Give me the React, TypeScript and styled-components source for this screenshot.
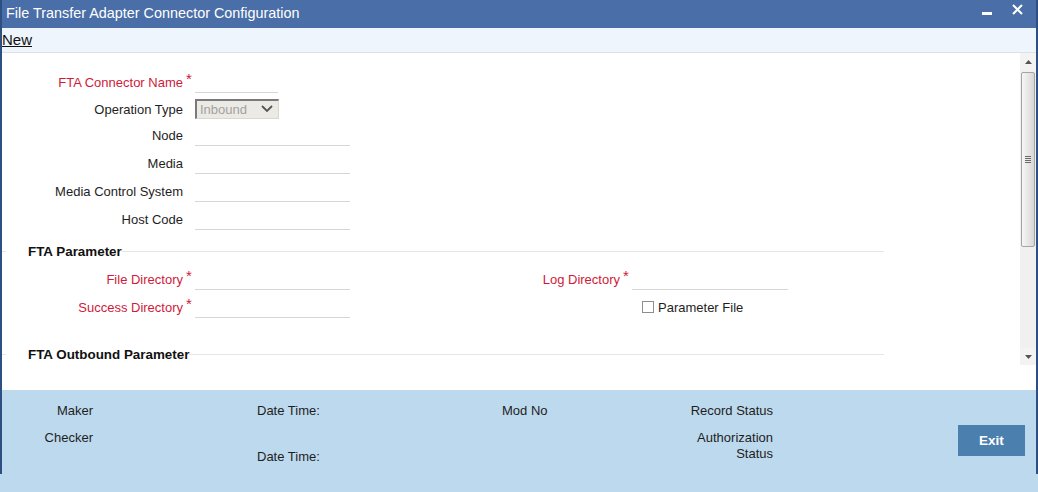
import React from "react";
import styled, { createGlobalStyle } from "styled-components";

const GlobalStyle = createGlobalStyle`
  html, body { margin: 0; padding: 0; background: #fff; }
  body { font-family: "Liberation Sans", Arial, sans-serif; font-size: 13px; color: #1e1e1e; }
  * { box-sizing: border-box; }
`;

const Window = styled.div`
  width: 1038px;
  height: 492px;
  display: flex;
  flex-direction: column;
  background: #fff;
`;

const Frame = styled.div`
  height: 474px;
  flex: none;
  display: flex;
  flex-direction: column;
  border-left: 2px solid #2d4f82;
  border-right: 2px solid #2d4f82;
`;

const TitleBar = styled.div`
  height: 28px;
  flex: none;
  background: #4a6ea7;
  color: #fff;
  display: flex;
  align-items: flex-start;
  padding-left: 4px;
  font-size: 14.4px;
`;

const TitleText = styled.span`
  flex: 1;
  line-height: 27px;
`;

const MinBtn = styled.span`
  width: 10px;
  height: 3px;
  background: #fff;
  margin-top: 12px;
  margin-right: 20px;
`;

const CloseBtn = styled.svg`
  width: 11px;
  height: 11px;
  margin-top: 4px;
  margin-right: 13px;
`;

const Toolbar = styled.div`
  height: 25px;
  flex: none;
  background: #eef5fd;
  border-bottom: 1px solid #dde1e5;
  display: flex;
  align-items: center;
`;

const ToolLink = styled.span`
  font-size: 15px;
  text-decoration: underline;
  color: #111;
  line-height: 24px;
`;

const Main = styled.div`
  height: 312px;
  flex: none;
  display: flex;
  overflow: hidden;
`;

const Form = styled.div`
  flex: 1;
  padding-top: 15px;
  display: flex;
  flex-direction: column;
`;

const Row = styled.div<{ $h?: number; $mt?: number }>`
  display: flex;
  align-items: center;
  height: ${(p) => p.$h ?? 28}px;
  margin-top: ${(p) => p.$mt ?? 0}px;
  flex: none;
`;

const Label = styled.span<{ $w: number; $req?: boolean }>`
  width: ${(p) => p.$w}px;
  text-align: right;
  color: ${(p) => (p.$req ? "#cf1a3a" : "#1e1e1e")};
  font-size: 13px;
  white-space: nowrap;
  padding-top: 1px;
`;

const Star = styled.span`
  width: 12px;
  padding-left: 3px;
  color: #cf1a3a;
  font-size: 15px;
  margin-top: -7px;
  flex: none;
`;

const Input = styled.div<{ $w?: number }>`
  width: ${(p) => p.$w ?? 155}px;
  height: 22px;
  border-bottom: 1px solid #d6d6d6;
  flex: none;
`;

const SelectBox = styled.div`
  width: 84px;
  height: 20px;
  background: #ebeae4;
  border-top: 2px solid #7a7a7a;
  border-left: 2px solid #7a7a7a;
  border-right: 1px solid #d8d7d0;
  border-bottom: 1px solid #d8d7d0;
  display: flex;
  align-items: center;
  justify-content: space-between;
  padding: 0 5px 0 3px;
  color: #a2a2a2;
  font-size: 13px;
`;

const Chevron = styled.svg`
  width: 12px;
  height: 8px;
`;

const Section = styled.div<{ $mt: number }>`
  width: 882px;
  height: 20px;
  margin-top: ${(p) => p.$mt}px;
  display: flex;
  align-items: center;
  flex: none;
`;

const SectionLine = styled.span<{ $w?: number }>`
  height: 1px;
  background: #e6e6e6;
  ${(p) => (p.$w ? `width: ${p.$w}px; flex: none;` : "flex: 1;")}
`;

const SectionTitle = styled.span`
  font-weight: bold;
  font-size: 13.4px;
  color: #111;
  margin-left: 22px;
`;

const Spacer = styled.span<{ $w: number }>`
  width: ${(p) => p.$w}px;
  flex: none;
`;

const CheckBox = styled.span`
  width: 12px;
  height: 12px;
  border: 1px solid #8e8e8e;
  background: #fff;
  flex: none;
`;

const CheckLabel = styled.span`
  margin-left: 4px;
  font-size: 13px;
  color: #1e1e1e;
`;

const ScrollBar = styled.div`
  width: 16px;
  flex: none;
  background: #f0f0f0;
  display: flex;
  flex-direction: column;
`;

const ArrowBtn = styled.div`
  height: 17px;
  flex: none;
  display: flex;
  align-items: center;
  justify-content: center;
  background: #f3f3f3;
`;

const Thumb = styled.div`
  margin: 2px 1px 0 1px;
  height: 175px;
  flex: none;
  border: 1px solid #a4a4a4;
  border-radius: 2px;
  background: linear-gradient(to right, #f6f6f6, #e4e4e4 60%, #d6d6d6);
  display: flex;
  align-items: center;
  justify-content: center;
`;

const Grip = styled.div`
  width: 6px;
  height: 7px;
  background: repeating-linear-gradient(
    to bottom,
    #6a6a6a 0px,
    #6a6a6a 1px,
    transparent 1px,
    transparent 2px
  );
`;

const Track = styled.div`
  flex: 1;
`;

const GapArea = styled.div`
  height: 25px;
  flex: none;
  background: #fff;
`;

const Footer = styled.div`
  flex: 1;
  background: #bdd9ed;
  display: flex;
  padding-top: 14px;
  font-size: 13px;
  color: #1e1e1e;
`;

const FootCol = styled.div<{ $w: number; $ml?: number; $right?: boolean }>`
  width: ${(p) => p.$w}px;
  margin-left: ${(p) => p.$ml ?? 0}px;
  flex: none;
  display: flex;
  flex-direction: column;
  align-items: ${(p) => (p.$right ? "flex-end" : "flex-start")};
  text-align: ${(p) => (p.$right ? "right" : "left")};
`;

const FootText = styled.span<{ $mt?: number; $lh?: number }>`
  line-height: ${(p) => p.$lh ?? 14}px;
  margin-top: ${(p) => p.$mt ?? 0}px;
  white-space: nowrap;
`;

const ExitButton = styled.button`
  margin-top: 21px;
  width: 67px;
  height: 31px;
  border: none;
  background: #4b7fae;
  color: #fff;
  font-family: "Liberation Sans", Arial, sans-serif;
  font-size: 13.5px;
  font-weight: bold;
  padding: 0;
`;

const FooterTail = styled.div`
  flex: 1;
  background: #bdd9ed;
`;

const L = 181;

export default function App() {
  return (
    <>
      <GlobalStyle />
      <Window>
        <Frame>
          <TitleBar>
            <TitleText>File Transfer Adapter Connector Configuration</TitleText>
            <MinBtn />
            <CloseBtn viewBox="0 0 11 11">
              <path d="M1 1 L10 10 M10 1 L1 10" stroke="#fff" strokeWidth="2" />
            </CloseBtn>
          </TitleBar>
          <Toolbar>
            <ToolLink>New</ToolLink>
          </Toolbar>
          <Main>
            <Form>
              <Row>
                <Label $w={L} $req>FTA Connector Name</Label>
                <Star>*</Star>
                <Input $w={83} />
              </Row>
              <Row $h={25}>
                <Label $w={L}>Operation Type</Label>
                <Spacer $w={12} />
                <SelectBox>
                  <span>Inbound</span>
                  <Chevron viewBox="0 0 12 8">
                    <path d="M1 1 L6 6 L11 1" stroke="#555" strokeWidth="1.8" fill="none" />
                  </Chevron>
                </SelectBox>
              </Row>
              <Row>
                <Label $w={L}>Node</Label>
                <Spacer $w={12} />
                <Input />
              </Row>
              <Row>
                <Label $w={L}>Media</Label>
                <Spacer $w={12} />
                <Input />
              </Row>
              <Row>
                <Label $w={L}>Media Control System</Label>
                <Spacer $w={12} />
                <Input />
              </Row>
              <Row>
                <Label $w={L}>Host Code</Label>
                <Spacer $w={12} />
                <Input />
              </Row>

              <Section $mt={8}>
                <SectionLine $w={4} />
                <SectionTitle>FTA Parameter</SectionTitle>
                <SectionLine />
              </Section>
              <Row $mt={4}>
                <Label $w={L} $req>File Directory</Label>
                <Star>*</Star>
                <Input />
                <Label $w={270} $req>Log Directory</Label>
                <Star>*</Star>
                <Input $w={156} />
              </Row>
              <Row>
                <Label $w={L} $req>Success Directory</Label>
                <Star>*</Star>
                <Input />
                <Spacer $w={292} />
                <CheckBox />
                <CheckLabel>Parameter File</CheckLabel>
              </Row>

              <Section $mt={23}>
                <SectionLine $w={4} />
                <SectionTitle>FTA Outbound Parameter</SectionTitle>
                <SectionLine />
              </Section>
            </Form>
            <ScrollBar>
              <ArrowBtn>
                <svg width="7" height="4" viewBox="0 0 7 4">
                  <path d="M0 4 L3.5 0 L7 4 Z" fill="#555" />
                </svg>
              </ArrowBtn>
              <Thumb>
                <Grip />
              </Thumb>
              <Track />
              <ArrowBtn>
                <svg width="7" height="4" viewBox="0 0 7 4">
                  <path d="M0 0 L3.5 4 L7 0 Z" fill="#555" />
                </svg>
              </ArrowBtn>
            </ScrollBar>
          </Main>
          <GapArea />
          <Footer>
            <FootCol $w={91} $right>
              <FootText>Maker</FootText>
              <FootText $mt={13}>Checker</FootText>
            </FootCol>
            <FootCol $w={245} $ml={164}>
              <FootText>Date Time:</FootText>
              <FootText $mt={32}>Date Time:</FootText>
            </FootCol>
            <FootCol $w={140}>
              <FootText>Mod No</FootText>
            </FootCol>
            <FootCol $w={131} $right>
              <FootText>Record Status</FootText>
              <FootText $mt={12} $lh={16}>
                Authorization
                <br />
                Status
              </FootText>
            </FootCol>
            <FootCol $w={67} $ml={185}>
              <ExitButton>Exit</ExitButton>
            </FootCol>
          </Footer>
        </Frame>
        <FooterTail />
      </Window>
    </>
  );
}
